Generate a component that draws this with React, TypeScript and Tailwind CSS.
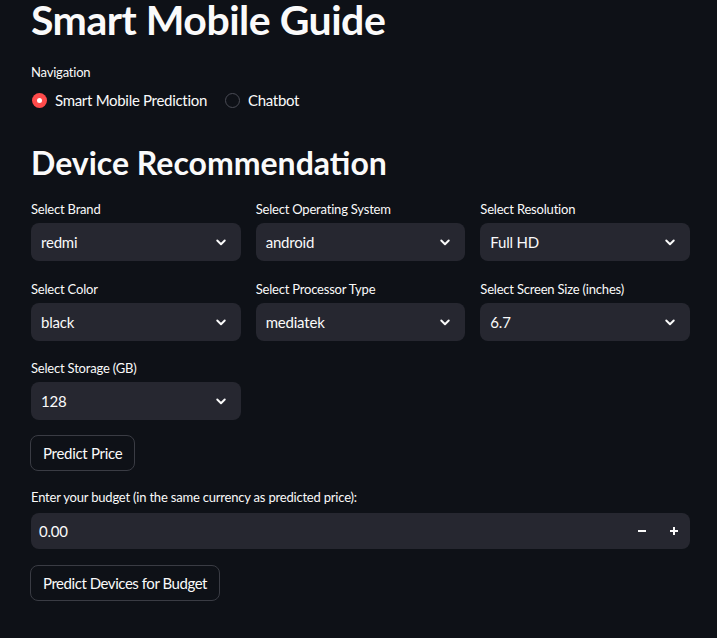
import React from "react";

const font = { fontFamily: "Lato, 'Noto Sans', sans-serif" };

function Chevron() {
  return (
    <svg width="18" height="18" viewBox="0 0 24 24" fill="none" stroke="#fafafa" strokeWidth="2.6" strokeLinecap="round" strokeLinejoin="round">
      <path d="M7 10l5 5 5-5" />
    </svg>
  );
}

function Select({ label, value }: { label: string; value: string }) {
  return (
    <div className="flex flex-col">
      <div className="text-[13px] tracking-[-0.2px] leading-[20px] text-[#fafafa] mb-[4px] h-[20px]">{label}</div>
      <div className="h-[38px] rounded-[8px] bg-[#262730] flex items-center justify-between pl-[10px] pr-[11px]">
        <span className="text-[15px] tracking-[-0.2px] text-[#fafafa]">{value}</span>
        <Chevron />
      </div>
    </div>
  );
}

export default function App() {
  return (
    <div className="min-h-[638px] w-full bg-[#0e1117] text-[#fafafa] overflow-hidden" style={font}>
      <div className="ml-[31px] w-[659px]">
        <h1 className="text-[41px] font-bold leading-[40px] pt-0 tracking-[-0.5px]">Smart Mobile Guide</h1>
        <div className="mt-[22px] text-[13px] tracking-[-0.2px] leading-[20px] h-[20px]">Navigation</div>
        <div className="mt-[8px] flex items-center h-[20px]">
          <div className="flex items-center">
            <span className="w-[15px] h-[15px] rounded-full bg-[#ff4b4b] flex items-center justify-center ml-[1px]">
              <span className="w-[5px] h-[5px] rounded-full bg-white" />
            </span>
            <span className="ml-[8px] text-[15px] tracking-[-0.3px]">Smart Mobile Prediction</span>
          </div>
          <div className="flex items-center ml-[18px]">
            <span className="w-[15px] h-[15px] rounded-full border border-[#4a4c55] bg-[#0e1117]" />
            <span className="ml-[8px] text-[15px] tracking-[-0.3px]">Chatbot</span>
          </div>
        </div>
        <h2 className="mt-[33px] text-[32px] font-bold leading-[40px]">Device Recommendation</h2>
        <div className="mt-[16px] flex flex-col gap-y-[17px]">
          <div className="grid grid-cols-3 gap-x-[15px]">
            <Select label="Select Brand" value="redmi" />
            <Select label="Select Operating System" value="android" />
            <Select label="Select Resolution" value="Full HD" />
          </div>
          <div className="grid grid-cols-3 gap-x-[15px] mt-[1px]">
            <Select label="Select Color" value="black" />
            <Select label="Select Processor Type" value="mediatek" />
            <Select label="Select Screen Size (inches)" value="6.7" />
          </div>
          <div className="grid grid-cols-3 gap-x-[15px]">
            <Select label="Select Storage (GB)" value="128" />
          </div>
        </div>
        <button className="mt-[15px] h-[36px] px-[12px] rounded-[8px] border border-[#3a3c44] bg-[#0e1117] text-[15px] tracking-[-0.3px] text-[#fafafa] -ml-[1px]">
          Predict Price
        </button>
        <div className="mt-[16px] text-[13px] tracking-[-0.2px] leading-[20px] h-[20px]">Enter your budget (in the same currency as predicted price):</div>
        <div className="mt-[6px] h-[36px] rounded-[8px] bg-[#262730] flex items-center justify-between pl-[8px]">
          <span className="text-[15px] tracking-[-0.2px]">0.00</span>
          <div className="flex items-center h-full">
            <span className="w-[32px] h-full flex items-center justify-center">
              <svg width="10" height="10" viewBox="0 0 10 10"><path d="M1 5h8" stroke="#fafafa" strokeWidth="2" /></svg>
            </span>
            <span className="w-[32px] h-full flex items-center justify-center">
              <svg width="10" height="10" viewBox="0 0 10 10"><path d="M1 5h8M5 1v8" stroke="#fafafa" strokeWidth="2" /></svg>
            </span>
          </div>
        </div>
        <button className="mt-[16px] h-[36px] px-[12px] rounded-[8px] border border-[#3a3c44] bg-[#0e1117] text-[15px] tracking-[-0.45px] text-[#fafafa] -ml-[1px]">
          Predict Devices for Budget
        </button>
      </div>
    </div>
  );
}
